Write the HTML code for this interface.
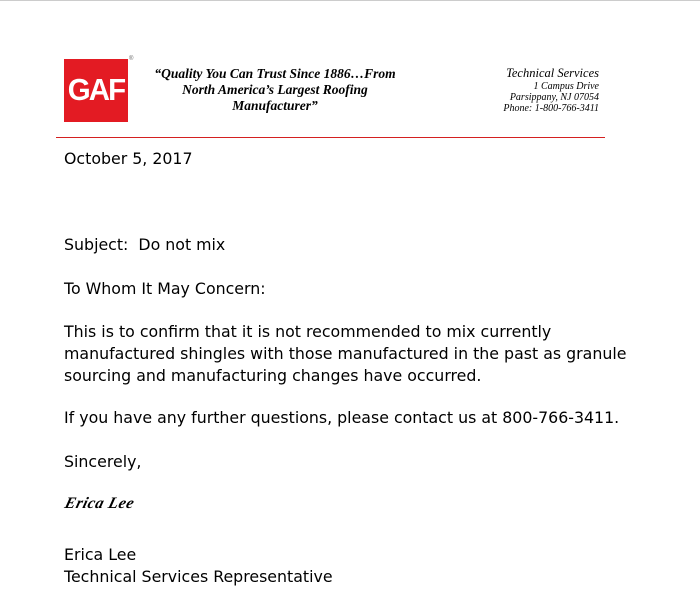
<!DOCTYPE html>
<html><head><meta charset="utf-8"><style>
body{margin:0;width:700px;height:592px;background:#fff;position:relative;overflow:hidden;border-top:1px solid #ccc;box-sizing:border-box}
.t{position:absolute;left:64px;font-family:"DejaVu Sans",sans-serif;font-size:15.8px;color:#000;white-space:nowrap;line-height:22px}
.s{position:absolute;font-family:"Liberation Serif",serif;font-style:italic;color:#000;white-space:nowrap}
</style></head><body>
<div style="position:absolute;left:64px;top:58px;width:64px;height:63px;background:#e31b23"></div>
<div style="position:absolute;left:64px;top:72px;width:64px;text-align:center;font-family:'Liberation Sans',sans-serif;font-weight:bold;font-size:31px;color:#fff;letter-spacing:-2px;line-height:34px;transform:scaleX(0.95)">GAF</div>
<div style="position:absolute;left:129px;top:55px;font-family:'Liberation Sans',sans-serif;font-size:6px;color:#666">®</div>
<div class="s" style="left:135px;top:65px;width:280px;text-align:center;font-weight:bold;font-size:13.5px;line-height:16px">“Quality You Can Trust Since 1886…From<br>North America’s Largest Roofing<br>Manufacturer”</div>
<div class="s" style="right:101px;top:65px;text-align:right;font-size:12.5px;line-height:14px">Technical Services</div>
<div class="s" style="right:101px;top:80px;text-align:right;font-size:10px;line-height:11px">1 Campus Drive<br>Parsippany, NJ 07054<br>Phone: 1-800-766-3411</div>
<div style="position:absolute;left:56px;top:136px;width:549px;height:1px;background:#d42020"></div>
<div class="t" style="top:147px">October 5, 2017</div>
<div class="t" style="top:233px">Subject:&nbsp; Do not mix</div>
<div class="t" style="top:277px">To Whom It May Concern:</div>
<div class="t" style="top:320px">This is to confirm that it is not recommended to mix currently<br>manufactured shingles with those manufactured in the past as granule<br>sourcing and manufacturing changes have occurred.</div>
<div class="t" style="top:406px">If you have any further questions, please contact us at 800-766-3411.</div>
<div class="t" style="top:450px">Sincerely,</div>
<div class="s" style="left:65px;top:494px;font-size:16px;font-weight:bold;letter-spacing:0.5px;transform:skewX(-15deg)">Erica Lee</div>
<div class="t" style="top:543px">Erica Lee<br>Technical Services Representative</div>
</body></html>
